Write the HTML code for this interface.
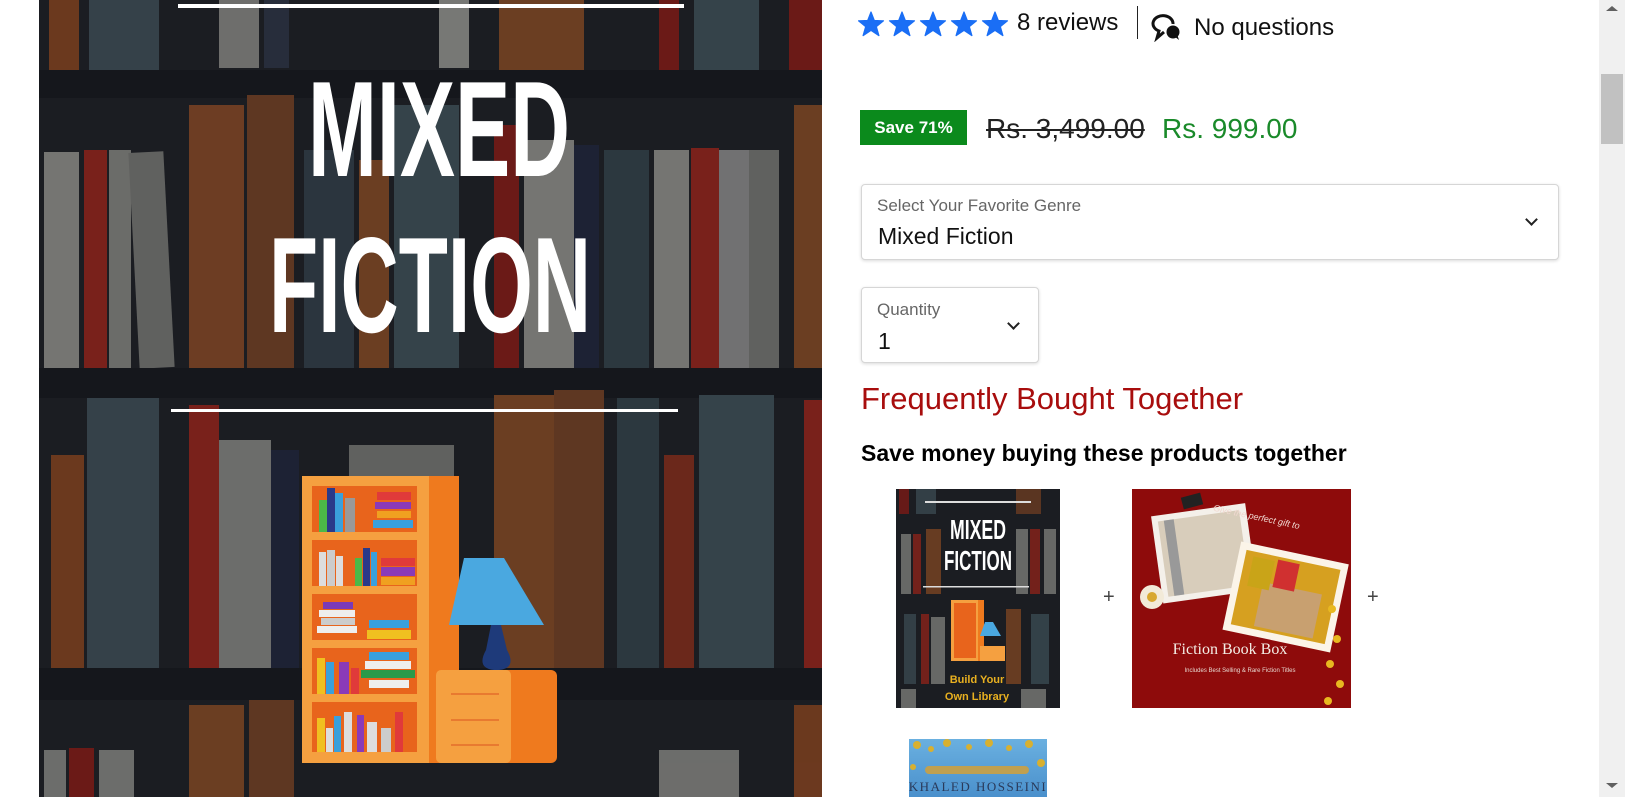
<!DOCTYPE html>
<html><head><meta charset="utf-8">
<style>
*{margin:0;padding:0;box-sizing:border-box}
html,body{width:1625px;height:797px;overflow:hidden;background:#fff;font-family:"Liberation Sans",sans-serif;color:#111}
.abs{position:absolute}
.box{position:absolute;border:1px solid #d6d6d6;border-radius:4px;box-shadow:0 1px 3px rgba(0,0,0,.15);background:#fff}
.lbl{position:absolute;left:15px;font-size:17px;color:#666}
.val{position:absolute;left:16px;font-size:23px;color:#111}
.chev{position:absolute;width:9px;height:9px;border-right:2px solid #222;border-bottom:2px solid #222;transform:rotate(45deg)}
</style></head><body>

<svg class="abs" style="left:39px;top:0" width="783" height="797" viewBox="0 0 783 797">
<rect width="783" height="797" fill="#1b1d22"/>
<g opacity="0.85">
<rect x="10" y="0" width="30" height="70" fill="#7a3e1e"/>
<rect x="50" y="0" width="70" height="70" fill="#3a4850"/>
<rect x="180" y="0" width="40" height="68" fill="#7d7d7a"/>
<rect x="225" y="0" width="25" height="68" fill="#2a3040"/>
<rect x="400" y="0" width="30" height="68" fill="#888884"/>
<rect x="460" y="0" width="85" height="70" fill="#7a4422"/>
<rect x="620" y="0" width="20" height="70" fill="#7a1a16"/>
<rect x="655" y="0" width="65" height="70" fill="#3a4a52"/>
<rect x="750" y="0" width="33" height="70" fill="#7a1a16"/>
<rect x="0" y="70" width="783" height="28" fill="#15171b"/>
<rect x="5" y="152" width="35" height="216" fill="#858580"/>
<rect x="45" y="150" width="23" height="218" fill="#8a221a"/>
<rect x="70" y="150" width="22" height="218" fill="#7a7a76"/>
<rect x="95" y="152" width="35" height="216" fill="#6d6d6a" transform="rotate(-3 112 260)"/>
<rect x="150" y="105" width="55" height="263" fill="#7c4324"/>
<rect x="208" y="95" width="47" height="273" fill="#6a3c22"/>
<rect x="265" y="150" width="50" height="218" fill="#2e3a44"/>
<rect x="320" y="160" width="30" height="208" fill="#7a4422"/>
<rect x="355" y="105" width="65" height="263" fill="#3a4a52"/>
<rect x="455" y="125" width="25" height="243" fill="#7a1a16"/>
<rect x="485" y="140" width="50" height="228" fill="#858580"/>
<rect x="535" y="145" width="25" height="223" fill="#1e2438"/>
<rect x="565" y="150" width="45" height="218" fill="#2f3d45"/>
<rect x="615" y="150" width="35" height="218" fill="#858580"/>
<rect x="652" y="148" width="28" height="220" fill="#8a221a"/>
<rect x="680" y="150" width="30" height="218" fill="#808080"/>
<rect x="710" y="150" width="30" height="218" fill="#6d6d6a"/>
<rect x="755" y="105" width="28" height="263" fill="#7a4422"/>
<rect x="0" y="368" width="783" height="30" fill="#15171b"/>
<rect x="12" y="455" width="33" height="213" fill="#7a3e1e"/>
<rect x="48" y="398" width="72" height="270" fill="#3a4850"/>
<rect x="150" y="405" width="30" height="263" fill="#8a221a"/>
<rect x="180" y="440" width="52" height="228" fill="#7b7b78"/>
<rect x="232" y="450" width="28" height="218" fill="#1e2438"/>
<rect x="310" y="445" width="105" height="223" fill="#6d6d6a"/>
<rect x="455" y="395" width="60" height="273" fill="#7a4422"/>
<rect x="515" y="390" width="50" height="278" fill="#6a3c22"/>
<rect x="578" y="398" width="42" height="270" fill="#2f3d45"/>
<rect x="625" y="455" width="30" height="213" fill="#7a2a1a"/>
<rect x="660" y="395" width="75" height="273" fill="#3a4a52"/>
<rect x="765" y="400" width="18" height="268" fill="#8a221a"/>
<rect x="0" y="668" width="783" height="32" fill="#15171b"/>
<rect x="5" y="750" width="22" height="47" fill="#7b7b78"/>
<rect x="30" y="748" width="25" height="49" fill="#7a1a16"/>
<rect x="60" y="750" width="35" height="47" fill="#7b7b78"/>
<rect x="150" y="705" width="55" height="92" fill="#7a4422"/>
<rect x="210" y="700" width="45" height="97" fill="#6a3c22"/>
<rect x="620" y="750" width="80" height="47" fill="#7b7b78"/>
<rect x="755" y="705" width="28" height="92" fill="#7a3e1e"/>
</g>
<rect x="139" y="4" width="506" height="4" fill="#fff"/>
<rect x="132" y="409" width="507" height="3" fill="#fff"/>
<text x="400" y="176" text-anchor="middle" font-family="Liberation Sans" font-weight="bold" font-size="136" fill="#fff" textLength="262" lengthAdjust="spacingAndGlyphs">MIXED</text>
<text x="391" y="332" text-anchor="middle" font-family="Liberation Sans" font-weight="bold" font-size="136" fill="#fff" textLength="322" lengthAdjust="spacingAndGlyphs">FICTION</text>
<rect x="263" y="476" width="157" height="287" fill="#f5a040"/>
<rect x="390" y="476" width="30" height="287" fill="#ef7a1e"/>
<g fill="#e8641c">
<rect x="273" y="486" width="105" height="46"/>
<rect x="273" y="540" width="105" height="46"/>
<rect x="273" y="594" width="105" height="46"/>
<rect x="273" y="648" width="105" height="46"/>
<rect x="273" y="702" width="105" height="50"/>
</g>
<g>
<rect x="280" y="500" width="8" height="32" fill="#4cb848"/><rect x="288" y="488" width="8" height="44" fill="#2a3a8a"/><rect x="296" y="493" width="8" height="39" fill="#3aa0dc"/><rect x="306" y="498" width="10" height="34" fill="#999"/>
<rect x="338" y="492" width="34" height="8" fill="#e03a3a"/><rect x="336" y="502" width="36" height="7" fill="#8a3ab8"/><rect x="338" y="511" width="34" height="7" fill="#f0a020"/><rect x="334" y="520" width="40" height="8" fill="#3aa0dc"/>
<rect x="280" y="552" width="7" height="34" fill="#ddd"/><rect x="288" y="550" width="8" height="36" fill="#ccc"/><rect x="297" y="556" width="7" height="30" fill="#ddd"/><rect x="316" y="558" width="7" height="28" fill="#4cb848"/><rect x="324" y="548" width="7" height="38" fill="#2a3a8a"/><rect x="332" y="552" width="6" height="34" fill="#3aa0dc"/>
<rect x="342" y="558" width="34" height="8" fill="#e03a3a"/><rect x="342" y="567" width="34" height="9" fill="#8a3ab8"/><rect x="342" y="577" width="34" height="8" fill="#f0a020"/>
<rect x="284" y="602" width="30" height="7" fill="#7a3ab8"/><rect x="280" y="610" width="36" height="7" fill="#eee"/><rect x="282" y="618" width="34" height="7" fill="#ccc"/><rect x="278" y="626" width="40" height="7" fill="#eee"/>
<rect x="330" y="620" width="40" height="8" fill="#3aa0dc"/><rect x="328" y="630" width="44" height="9" fill="#f0c020"/>
<rect x="278" y="658" width="8" height="36" fill="#f0c020"/><rect x="287" y="662" width="8" height="32" fill="#3aa0dc"/><rect x="300" y="662" width="10" height="32" fill="#8a3ab8"/><rect x="312" y="668" width="8" height="26" fill="#e03a3a"/>
<rect x="330" y="652" width="40" height="8" fill="#3aa0dc"/><rect x="326" y="661" width="46" height="8" fill="#eee"/><rect x="322" y="670" width="54" height="8" fill="#2a9a4a"/><rect x="330" y="680" width="40" height="8" fill="#eee"/>
<rect x="278" y="718" width="8" height="34" fill="#f0c020"/><rect x="287" y="728" width="7" height="24" fill="#ddd"/><rect x="295" y="716" width="7" height="36" fill="#3aa0dc"/><rect x="305" y="712" width="8" height="40" fill="#ddd"/><rect x="318" y="715" width="7" height="37" fill="#8a3ab8"/><rect x="328" y="722" width="10" height="30" fill="#ddd"/><rect x="342" y="728" width="10" height="24" fill="#ccc"/><rect x="356" y="712" width="8" height="40" fill="#e03a3a"/>
</g>
<polygon points="425,558 465,558 505,625 410,625" fill="#4aa8e0"/>
<path d="M452 625 L462 625 L468 650 Q478 668 460 670 L455 670 Q437 668 447 650 Z" fill="#1e3a7a"/>
<rect x="397" y="670" width="121" height="93" rx="6" fill="#ef7a1e"/>
<rect x="397" y="670" width="75" height="93" rx="5" fill="#f5a040"/>
<g stroke="#e87a30" stroke-width="2"><line x1="412" y1="694" x2="460" y2="694"/><line x1="412" y1="720" x2="460" y2="720"/><line x1="412" y1="745" x2="460" y2="745"/></g>
</svg>

<svg class="abs" style="left:858px;top:11px" width="156" height="28" viewBox="0 0 156 28">
<defs><path id="st" d="M13 1 L16.3 9.5 L25.5 9.8 L18.3 15.6 L20.9 24.6 L13 19.4 L5.1 24.6 L7.7 15.6 L0.5 9.8 L9.7 9.5 Z" fill="#1a6ef5" stroke="#1a6ef5" stroke-width="1.2" stroke-linejoin="round"/></defs>
<use href="#st" x="0"/><use href="#st" x="31"/><use href="#st" x="62"/><use href="#st" x="93"/><use href="#st" x="124"/>
</svg>
<div class="abs" style="left:1017px;top:9px;font-size:24px">8 reviews</div>
<div class="abs" style="left:1137px;top:6px;width:1px;height:33px;background:#222"></div>
<svg class="abs" style="left:1151px;top:12px" width="32" height="30" viewBox="0 0 32 30">
<path d="M22 12 A10 8 0 1 0 8 19 L6 26 L13 20" fill="none" stroke="#111" stroke-width="3"/>
<circle cx="22" cy="20" r="6.5" fill="#111"/><path d="M23 24 L28 28 L26 22Z" fill="#111"/>
</svg>
<div class="abs" style="left:1194px;top:14px;font-size:24px">No questions</div>

<div class="abs" style="left:860px;top:110px;width:107px;height:35px;background:#0b8a1c;color:#fff;font-weight:bold;font-size:17px;line-height:35px;text-align:center">Save 71%</div>
<div class="abs" style="left:986px;top:113px;font-size:28px;color:#222;text-decoration:line-through;text-decoration-thickness:2px">Rs. 3,499.00</div>
<div class="abs" style="left:1162px;top:113px;font-size:28px;color:#1a8a2a">Rs. 999.00</div>

<div class="box" style="left:861px;top:184px;width:698px;height:76px">
<div class="lbl" style="top:11px">Select Your Favorite Genre</div>
<div class="val" style="top:38px">Mixed Fiction</div>
<div class="chev" style="right:22px;top:30px"></div>
</div>
<div class="box" style="left:861px;top:287px;width:178px;height:76px">
<div class="lbl" style="top:12px">Quantity</div>
<div class="val" style="top:40px">1</div>
<div class="chev" style="right:20px;top:31px"></div>
</div>

<div class="abs" style="left:861px;top:381px;font-size:31px;color:#a80d0d">Frequently Bought Together</div>
<div class="abs" style="left:861px;top:440px;font-size:23px;font-weight:bold;color:#000">Save money buying these products together</div>

<svg class="abs" style="left:896px;top:489px" width="164" height="219" viewBox="0 0 164 219">
<rect width="164" height="219" fill="#1b1d22"/>
<g opacity=".8">
<rect x="3" y="0" width="10" height="25" fill="#7a1a16"/><rect x="20" y="0" width="20" height="25" fill="#3a4850"/><rect x="120" y="0" width="25" height="25" fill="#6a3c22"/>
<rect x="5" y="45" width="10" height="60" fill="#7b7b78"/><rect x="17" y="45" width="8" height="60" fill="#8a221a"/><rect x="30" y="40" width="15" height="65" fill="#7a4422"/><rect x="120" y="40" width="12" height="65" fill="#7b7b78"/><rect x="134" y="40" width="10" height="65" fill="#8a221a"/><rect x="148" y="40" width="12" height="65" fill="#7b7b78"/>
<rect x="8" y="125" width="12" height="70" fill="#3a4850"/><rect x="25" y="125" width="8" height="70" fill="#8a221a"/><rect x="35" y="128" width="14" height="67" fill="#7b7b78"/><rect x="110" y="120" width="15" height="75" fill="#7a4422"/><rect x="135" y="125" width="18" height="70" fill="#3a4a52"/>
<rect x="5" y="200" width="15" height="19" fill="#7b7b78"/><rect x="125" y="200" width="25" height="19" fill="#7b7b78"/>
</g>
<rect x="29" y="12" width="106" height="2" fill="#ddd"/>
<rect x="27" y="97" width="106" height="1.5" fill="#ddd"/>
<text x="82" y="50" text-anchor="middle" font-weight="bold" font-size="28" fill="#fff" textLength="56" lengthAdjust="spacingAndGlyphs">MIXED</text>
<text x="82" y="81" text-anchor="middle" font-weight="bold" font-size="28" fill="#fff" textLength="68" lengthAdjust="spacingAndGlyphs">FICTION</text>
<rect x="55" y="111" width="33" height="61" fill="#f5a040"/><rect x="82" y="111" width="6" height="61" fill="#ef7a1e"/>
<rect x="58" y="114" width="22" height="55" fill="#e8641c"/>
<polygon points="89,133 97,133 105,147 84,147" fill="#4aa8e0"/>
<rect x="84" y="157" width="25" height="15" fill="#f5a040"/>
<text x="81" y="194" text-anchor="middle" font-weight="bold" font-size="11" fill="#e8b020">Build Your</text>
<text x="81" y="211" text-anchor="middle" font-weight="bold" font-size="11" fill="#e8b020">Own Library</text>
</svg>
<div class="abs" style="left:1103px;top:586px;font-size:20px;color:#444">+</div>

<svg class="abs" style="left:1132px;top:489px" width="219" height="219" viewBox="0 0 219 219">
<rect width="219" height="219" fill="#8e0b0b"/>
<g transform="rotate(-8 60 60)"><rect x="24" y="22" width="95" height="88" fill="#f4f0ea"/><rect x="30" y="28" width="82" height="76" fill="#d8cdbb"/><rect x="36" y="28" width="10" height="76" fill="#999"/></g>
<rect x="50" y="6" width="20" height="12" fill="#222" transform="rotate(-15 60 12)"/>
<g transform="rotate(12 140 100)"><rect x="100" y="60" width="110" height="90" fill="#fbf4e8"/><rect x="107" y="67" width="96" height="76" fill="#d6a020"/><rect x="130" y="95" width="60" height="45" fill="#c8a070"/><rect x="115" y="72" width="22" height="30" fill="#c9a418"/><rect x="140" y="70" width="22" height="28" fill="#d03030"/></g>
<circle cx="20" cy="108" r="12" fill="#f2ead8"/><circle cx="20" cy="108" r="5" fill="#d8a830"/>
<g fill="#e8b820"><circle cx="200" cy="120" r="4"/><circle cx="205" cy="150" r="4"/><circle cx="198" cy="175" r="4"/><circle cx="208" cy="195" r="4"/><circle cx="196" cy="212" r="4"/></g>
<text x="80" y="30" font-style="italic" font-size="9" fill="#f0d8d0" transform="rotate(12 120 30)">Give the perfect gift to</text>
<text x="98" y="165" text-anchor="middle" font-family="Liberation Serif" font-size="16" fill="#f4eee6">Fiction Book Box</text>
<text x="108" y="183" text-anchor="middle" font-size="6" fill="#e8d8d0">Includes Best Selling &amp; Rare Fiction Titles</text>
</svg>
<div class="abs" style="left:1367px;top:586px;font-size:20px;color:#444">+</div>

<svg class="abs" style="left:909px;top:739px" width="138" height="58" viewBox="0 0 138 58">
<defs><linearGradient id="sky" x1="0" y1="0" x2="0" y2="1"><stop offset="0" stop-color="#6ab0e0"/><stop offset="1" stop-color="#4a90cc"/></linearGradient></defs>
<rect width="138" height="58" fill="url(#sky)"/>
<g fill="#d8b030"><circle cx="8" cy="6" r="4"/><circle cx="22" cy="10" r="3"/><circle cx="38" cy="4" r="4"/><circle cx="60" cy="8" r="3"/><circle cx="80" cy="4" r="4"/><circle cx="100" cy="9" r="3"/><circle cx="120" cy="5" r="4"/><circle cx="132" cy="24" r="4"/><circle cx="4" cy="28" r="3"/></g>
<rect x="16" y="27" width="104" height="8" rx="4" fill="#c0a050"/>
<text x="69" y="52" text-anchor="middle" font-family="Liberation Serif" font-size="13" fill="#2a3a5a" letter-spacing="1.5">KHALED HOSSEINI</text>
</svg>

<div class="abs" style="left:1599px;top:0;width:26px;height:797px;background:#f0f0f0"></div>
<div class="abs" style="left:1601px;top:74px;width:22px;height:70px;background:#c1c1c1"></div>
<div class="abs" style="left:1606px;top:6px;width:0;height:0;border-left:6px solid transparent;border-right:6px solid transparent;border-bottom:5px solid #606060"></div>
<div class="abs" style="left:1606px;top:783px;width:0;height:0;border-left:6px solid transparent;border-right:6px solid transparent;border-top:5px solid #606060"></div>
</body></html>
